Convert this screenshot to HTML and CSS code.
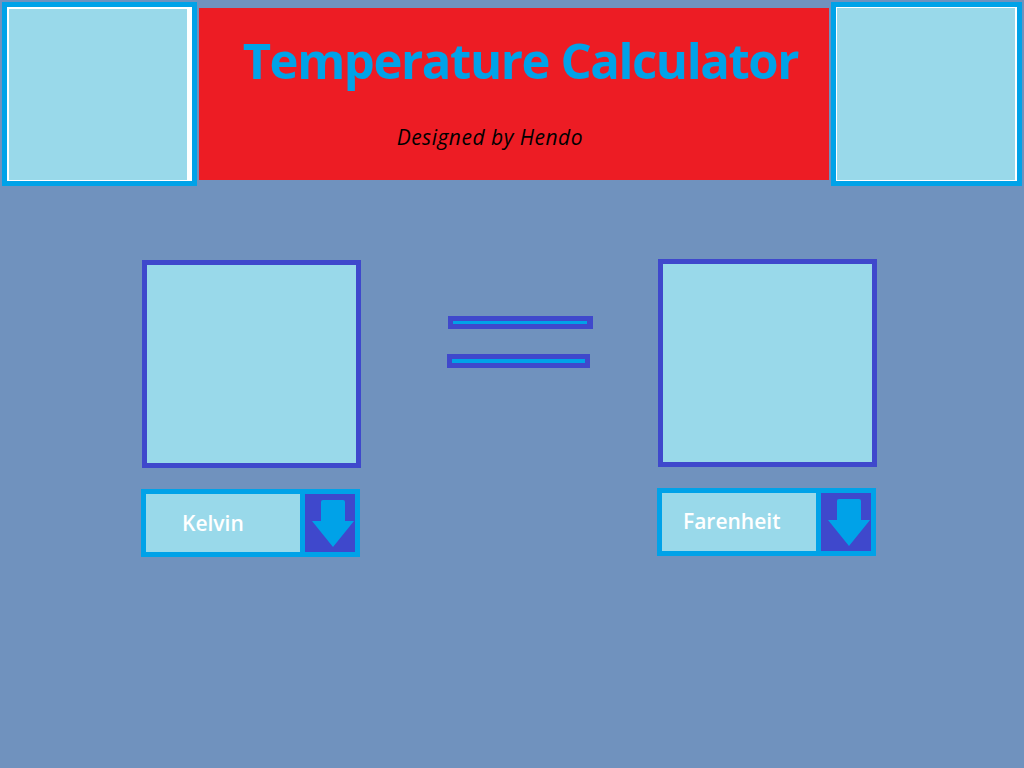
FILE: index.html
```html
<!DOCTYPE html>
<html>
<head>
<meta charset="utf-8">
<title>Temperature Calculator</title>
<link rel="stylesheet" href="styles.css">
</head>
<body>
<div class="top">
  <div class="corner corner-left"><div class="corner-fill"></div></div>
  <div class="banner">
    <div class="title">Temperature Calculator</div>
    <div class="subtitle">Designed by Hendo</div>
  </div>
  <div class="corner corner-right"><div class="corner-fill"></div></div>
</div>
<div class="main">
  <div class="col col-left">
    <div class="value-box"></div>
    <div class="dropdown">
      <div class="dd-label dd-label-kelvin">Kelvin</div>
      <div class="dd-btn">
        <svg width="50" height="58" viewBox="0 0 50 58"><path d="M18 6 H38 Q40 6 40 8 V27 H49 L28 53 L7 27 H16 V8 Q16 6 18 6 Z" fill="#00A2E8"/></svg>
      </div>
    </div>
  </div>
  <div class="equals">
    <div class="bar bar-top"></div>
    <div class="bar bar-bottom"></div>
  </div>
  <div class="col col-right">
    <div class="value-box"></div>
    <div class="dropdown">
      <div class="dd-label dd-label-far">Farenheit</div>
      <div class="dd-btn">
        <svg width="50" height="58" viewBox="0 0 50 58"><path d="M18 6 H38 Q40 6 40 8 V27 H49 L28 53 L7 27 H16 V8 Q16 6 18 6 Z" fill="#00A2E8"/></svg>
      </div>
    </div>
  </div>
</div>
</body>
</html>
```
FILE: styles.css
```css
html, body {
  margin: 0;
  padding: 0;
}
body {
  background: #7092BE;
  width: 1024px;
  height: 768px;
  overflow: hidden;
  font-family: "Open Sans", "Noto Sans", sans-serif;
}
.top {
  display: flex;
  align-items: flex-start;
  padding: 2px 2px 0 2px;
  height: 184px;
}
.corner {
  box-sizing: border-box;
  height: 184px;
  border: 5px solid #00A2E8;
  background: #99D9EA;
}
.corner-left {
  width: 195px;
}
.corner-right {
  width: 191px;
}
.corner-fill {
  box-sizing: border-box;
  width: 100%;
  height: 100%;
  background: #99D9EA;
  border-style: solid;
  border-color: #FFFFFF;
}
.corner-left .corner-fill {
  border-width: 2px 5px 1px 2px;
}
.corner-right .corner-fill {
  border-width: 1px 2px 1px 1px;
}
.banner {
  box-sizing: border-box;
  width: 632px;
  height: 172px;
  margin: 6px 2px 0 2px;
  background: #ED1C24;
  padding-top: 19px;
}
.title {
  font-size: 49px;
  font-weight: 700;
  letter-spacing: -1.4px;
  color: #00A2E8;
  padding-left: 44px;
  white-space: nowrap;
  line-height: normal;
}
.subtitle {
  margin-top: 30px;
  padding-left: 198px;
  font-size: 21px;
  font-style: italic;
  letter-spacing: 0.5px;
  color: #000000;
  line-height: normal;
}
.main {
  display: flex;
  align-items: flex-start;
  padding-left: 141px;
}
.col {
  display: flex;
  flex-direction: column;
  width: 220px;
}
.col-left {
  margin-top: 74px;
}
.col-right {
  margin-top: 73px;
  margin-left: 64px;
}
.value-box {
  box-sizing: border-box;
  width: 219px;
  height: 208px;
  margin-left: 1px;
  border: 5px solid #3F48CC;
  background: #99D9EA;
}
.dropdown {
  box-sizing: border-box;
  margin-top: 21px;
  width: 219px;
  height: 68px;
  border: 5px solid #00A2E8;
  display: flex;
  gap: 5px;
  background: #00A2E8;
}
.dd-label {
  box-sizing: border-box;
  width: 154px;
  height: 58px;
  background: #99D9EA;
  color: #FFFFFF;
  font-size: 21px;
  font-weight: 600;
  line-height: normal;
}
.dd-label-kelvin {
  padding: 15px 0 0 36px;
}
.dd-label-far {
  padding: 14px 0 0 21px;
}
.dd-btn {
  width: 50px;
  height: 58px;
  background: #3F48CC;
}
.dd-btn svg {
  display: block;
}
.equals {
  width: 146px;
  margin-left: 86px;
  margin-top: 130px;
  display: flex;
  flex-direction: column;
}
.bar {
  box-sizing: border-box;
  border: 5px solid #3F48CC;
  background: #00A2E8;
}
.bar-top {
  width: 145px;
  height: 13px;
  margin-left: 1px;
  border-right-width: 6px;
}
.bar-bottom {
  width: 143px;
  height: 14px;
  margin-top: 25px;
}
```
